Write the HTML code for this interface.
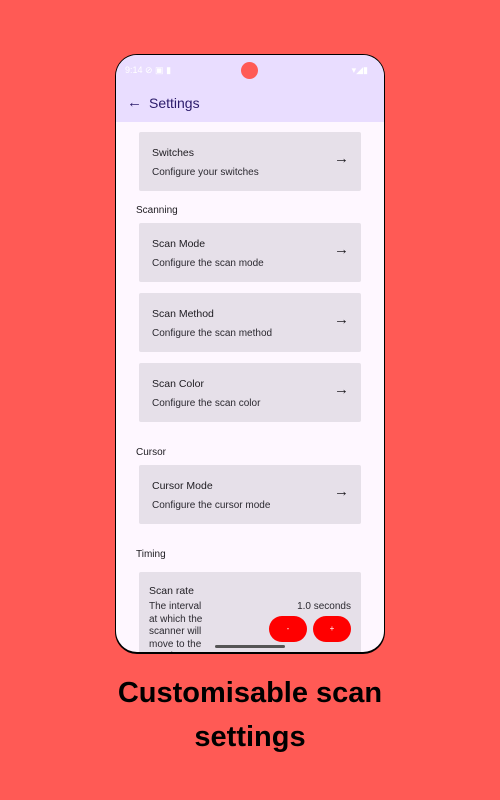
<!DOCTYPE html><html><head><style>
body{margin:0;width:500px;height:800px;background:#ff5a55;font-family:"Liberation Sans",sans-serif;position:relative;overflow:hidden}
.phone{position:absolute;left:115px;top:54px;width:270px;height:600px;background:#000;border-radius:22px;overflow:hidden}
.screen{position:absolute;left:1px;top:1px;right:1px;bottom:2px;background:#fef7ff;border-radius:21px;overflow:hidden}
.hdr{position:absolute;left:0;top:0;right:0;height:67px;background:#e9ddff}
.card{position:absolute;left:23px;width:222px;background:#e6e0e9;border-radius:2px}
.t{position:absolute;left:13px;font-size:10.5px;color:#1d1b20}
.s{position:absolute;left:13px;font-size:10px;color:#2b2930}
.ar{position:absolute;right:12px;font-size:15px;color:#1d1b20}
.sec{position:absolute;left:20px;font-size:10px;color:#1d1b20}
.cap{position:absolute;left:0;width:500px;text-align:center;font-weight:bold;font-size:29px;color:#000}
.btn{position:absolute;width:38px;height:26px;border-radius:13px;background:#ff0000;color:#fff;font-size:8px;text-align:center;line-height:26px}
</style></head><body>
<div class="phone"><div class="screen">
<div class="hdr">
<div style="position:absolute;left:9px;top:10px;font-size:9px;color:#fff">9:14 ⊘ ▣ ▮</div>
<div style="position:absolute;left:125px;top:7px;width:17px;height:17px;border-radius:50%;background:#ff5a55"></div>
<div style="position:absolute;right:16px;top:10px;font-size:9px;color:#fff">▾◢▮</div>
<div style="position:absolute;left:11px;top:39px;font-size:15px;color:#2a1a6a">←</div>
<div style="position:absolute;left:33px;top:40px;font-size:14px;color:#2a1a6a">Settings</div>
</div>
<div class="card" style="top:77px;height:59px"><div class="t" style="top:15px">Switches</div><div class="s" style="top:35px">Configure your switches</div><div class="ar" style="top:18px">→</div></div>
<div class="sec" style="top:150px">Scanning</div>
<div class="card" style="top:168px;height:59px"><div class="t" style="top:15px">Scan Mode</div><div class="s" style="top:35px">Configure the scan mode</div><div class="ar" style="top:18px">→</div></div>
<div class="card" style="top:238px;height:59px"><div class="t" style="top:15px">Scan Method</div><div class="s" style="top:35px">Configure the scan method</div><div class="ar" style="top:18px">→</div></div>
<div class="card" style="top:308px;height:59px"><div class="t" style="top:15px">Scan Color</div><div class="s" style="top:35px">Configure the scan color</div><div class="ar" style="top:18px">→</div></div>
<div class="sec" style="top:392px">Cursor</div>
<div class="card" style="top:410px;height:59px"><div class="t" style="top:15px">Cursor Mode</div><div class="s" style="top:35px">Configure the cursor mode</div><div class="ar" style="top:18px">→</div></div>
<div class="sec" style="top:494px">Timing</div>
<div class="card" style="top:517px;height:100px">
<div class="t" style="top:13px;left:10px">Scan rate</div>
<div class="s" style="top:29px;left:10px;line-height:12.5px;width:62px">The interval at which the scanner will move to the next item</div>
<div class="s" style="top:29px;left:auto;right:10px">1.0 seconds</div>
<div class="btn" style="left:130px;top:44px">-</div>
<div class="btn" style="left:174px;top:44px">+</div>
</div>
<div style="position:absolute;left:99px;top:590px;width:70px;height:3px;background:#555;border-radius:2px"></div>
</div></div>
<div class="cap" style="top:677px">Customisable scan</div>
<div class="cap" style="top:721px">settings</div>
</body></html>
